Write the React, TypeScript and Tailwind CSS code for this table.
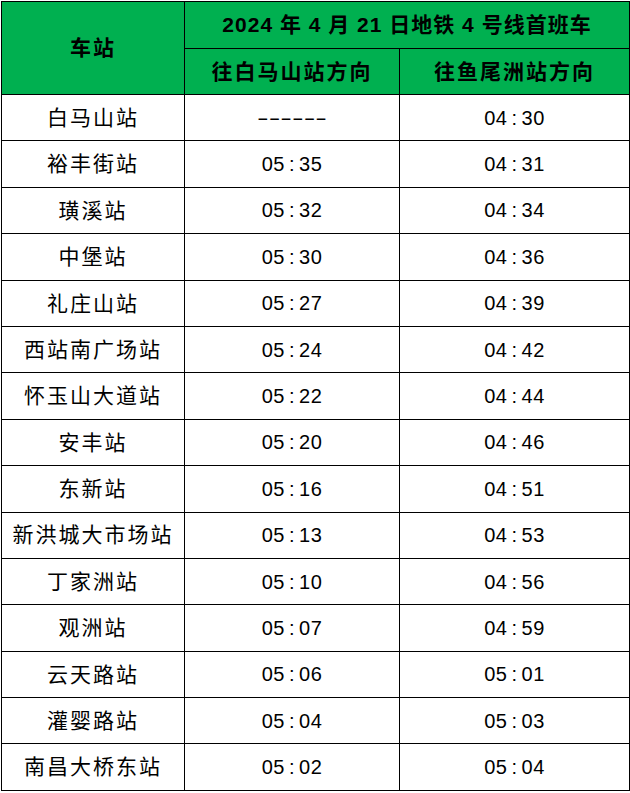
import React from "react";

const rows: [string, string, string][] = [
  ["白马山站", "------", "04:30"],
  ["裕丰街站", "05:35", "04:31"],
  ["璜溪站", "05:32", "04:34"],
  ["中堡站", "05:30", "04:36"],
  ["礼庄山站", "05:27", "04:39"],
  ["西站南广场站", "05:24", "04:42"],
  ["怀玉山大道站", "05:22", "04:44"],
  ["安丰站", "05:20", "04:46"],
  ["东新站", "05:16", "04:51"],
  ["新洪城大市场站", "05:13", "04:53"],
  ["丁家洲站", "05:10", "04:56"],
  ["观洲站", "05:07", "04:59"],
  ["云天路站", "05:06", "05:01"],
  ["灌婴路站", "05:04", "05:03"],
  ["南昌大桥东站", "05:02", "05:04"],
];

function Time({ v }: { v: string }) {
  if (v.startsWith("-")) {
    return <span className="inline-block scale-x-[1.75]">{v}</span>;
  }
  const [h, m] = v.split(":");
  return (
    <span className="tracking-[0.5px]">
      {h}
      <span className="mx-[4px]">:</span>
      {m}
    </span>
  );
}

export default function App() {
  const cell = "border border-black text-center align-middle p-0";
  return (
    <div
      className="bg-white w-[630px] h-[793px] pl-[1px] pt-[1px]"
      style={{ fontFamily: '"Liberation Sans", "Noto Sans CJK SC", sans-serif' }}
    >
      <table className="border-collapse w-[628px] table-fixed text-black">
        <colgroup>
          <col className="w-[183px]" />
          <col className="w-[215px]" />
          <col className="w-[230px]" />
        </colgroup>
        <thead>
          <tr className="h-[46.5px] bg-[#00b050]">
            <th rowSpan={2} className={`${cell} font-bold text-[21px] tracking-[2px]`}>
              车站
            </th>
            <th colSpan={2} className={`${cell} font-bold text-[21px] tracking-[1px]`}>
              2024 年 4 月 21 日地铁 4 号线首班车
            </th>
          </tr>
          <tr className="h-[46.5px] bg-[#00b050]">
            <th className={`${cell} font-bold text-[21px] tracking-[2px]`}>往白马山站方向</th>
            <th className={`${cell} font-bold text-[21px] tracking-[2px]`}>往鱼尾洲站方向</th>
          </tr>
        </thead>
        <tbody>
          {rows.map(([name, a, b]) => (
            <tr key={name} className="h-[46.4px]">
              <td className={`${cell} text-[21px] tracking-[2px]`}>{name}</td>
              <td className={`${cell} text-[20px]`}>
                <Time v={a} />
              </td>
              <td className={`${cell} text-[20px]`}>
                <Time v={b} />
              </td>
            </tr>
          ))}
        </tbody>
      </table>
    </div>
  );
}
